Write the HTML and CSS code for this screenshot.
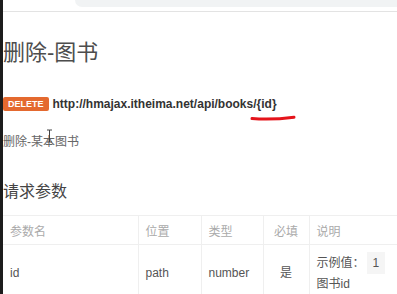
FILE: index.html
```html
<!DOCTYPE html>
<html lang="zh-CN">
<head>
    <meta charset="UTF-8">
    <meta name="viewport" content="width=device-width, initial-scale=1.0">
    <title>删除-图书</title>
    <link rel="stylesheet" href="styles.css">
</head>
<body>

<header class="toolbar">
    <div class="address"></div>
</header>

<div class="doc">
    <h1 class="title">删除-图书</h1>

    <div class="api">
        <span class="method">DELETE</span>
        <span class="url">http://hmajax.itheima.net/api/books/{id}</span>
        <!-- red marker stroke under {id} -->
        <svg class="mark" width="46" height="8" viewBox="0 0 46 8">
            <path d="M2 4.5 C 14 5.5, 30 5, 44 3.2" stroke="#e5141b" stroke-width="3" fill="none" stroke-linecap="round"/>
        </svg>
    </div>

    <p class="desc">删除-某本图书
        <svg class="cursor" width="7" height="14" viewBox="0 0 7 14">
            <path d="M1 1h2.5M3.5 1h2.5M3.5 1v12M1 13h2.5M3.5 13h2.5" stroke="#444" stroke-width="1" fill="none"/>
        </svg>
    </p>

    <h2 class="section">请求参数</h2>

    <table class="params">
        <thead>
            <tr>
                <th class="c-name">参数名</th>
                <th class="c-pos">位置</th>
                <th class="c-type">类型</th>
                <th class="c-req">必填</th>
                <th class="c-note">说明</th>
            </tr>
        </thead>
        <tbody>
            <tr>
                <td>id</td>
                <td>path</td>
                <td>number</td>
                <td class="c-req">是</td>
                <td class="c-note">示例值：<code>1</code><br>图书id</td>
            </tr>
        </tbody>
    </table>
</div>

</body>
</html>
```

FILE: styles.css
```css
* { margin: 0; padding: 0; box-sizing: border-box; }
body {
    font-family: "Liberation Sans", "Noto Sans CJK SC", sans-serif;
    background: #fff;
    border-left: 3px solid #1c1c1c;
    min-height: 100vh;
    overflow: hidden;
}

/* Browser chrome at the top */
.toolbar { height: 12px; border-bottom: 1px solid #e3e3e3; display: flex; justify-content: flex-end; }
.address { width: 322px; height: 7px; background: #f1f3f4; border-bottom-left-radius: 7px; }

.title {
    margin-top: 26px;
    font-size: 22px;
    line-height: 30px;
    font-weight: normal;
    color: #4d4d4d;
}

/* Method + url line */
.api { position: relative; margin-top: 28px; height: 16px; display: flex; align-items: center; gap: 4px; }
.method {
    background: #e4692f;
    color: #fff;
    font-size: 9px;
    font-weight: bold;
    line-height: 14px;
    padding: 0 5px;
    border-radius: 2px;
}
.url { font-size: 12px; font-weight: bold; color: #333; }
.mark { position: absolute; left: 247px; top: 18px; }

.desc { position: relative; margin-top: 21px; font-size: 12px; line-height: 18px; color: #666; }
.cursor { position: absolute; left: 43px; top: -4px; }

.section { margin-top: 29px; font-size: 16px; line-height: 24px; font-weight: normal; color: #444; }

/* Parameter table */
.params { margin-top: 11px; border-collapse: collapse; width: 100%; table-layout: fixed; }
.params th, .params td {
    border: 1px solid #efefef;
    text-align: left;
    padding: 0 7px;
    font-size: 12px;
    font-weight: normal;
}
.params tr > :first-child { border-left: none; }
.params tr > :last-child { border-right: none; }
.params th { height: 29px; color: #aaa; }
.params td { height: 56px; color: #555; line-height: 20px; }
.params .c-name { width: 135px; }
.params .c-pos { width: 63px; }
.params .c-type { width: 62px; }
.params .c-req { width: 46px; text-align: center; }
.params code {
    display: inline-block;
    font-family: "Liberation Sans", sans-serif;
    background: #f5f5f5;
    padding: 1px 6px;
    margin-left: 2px;
    line-height: 20px;
}
```
